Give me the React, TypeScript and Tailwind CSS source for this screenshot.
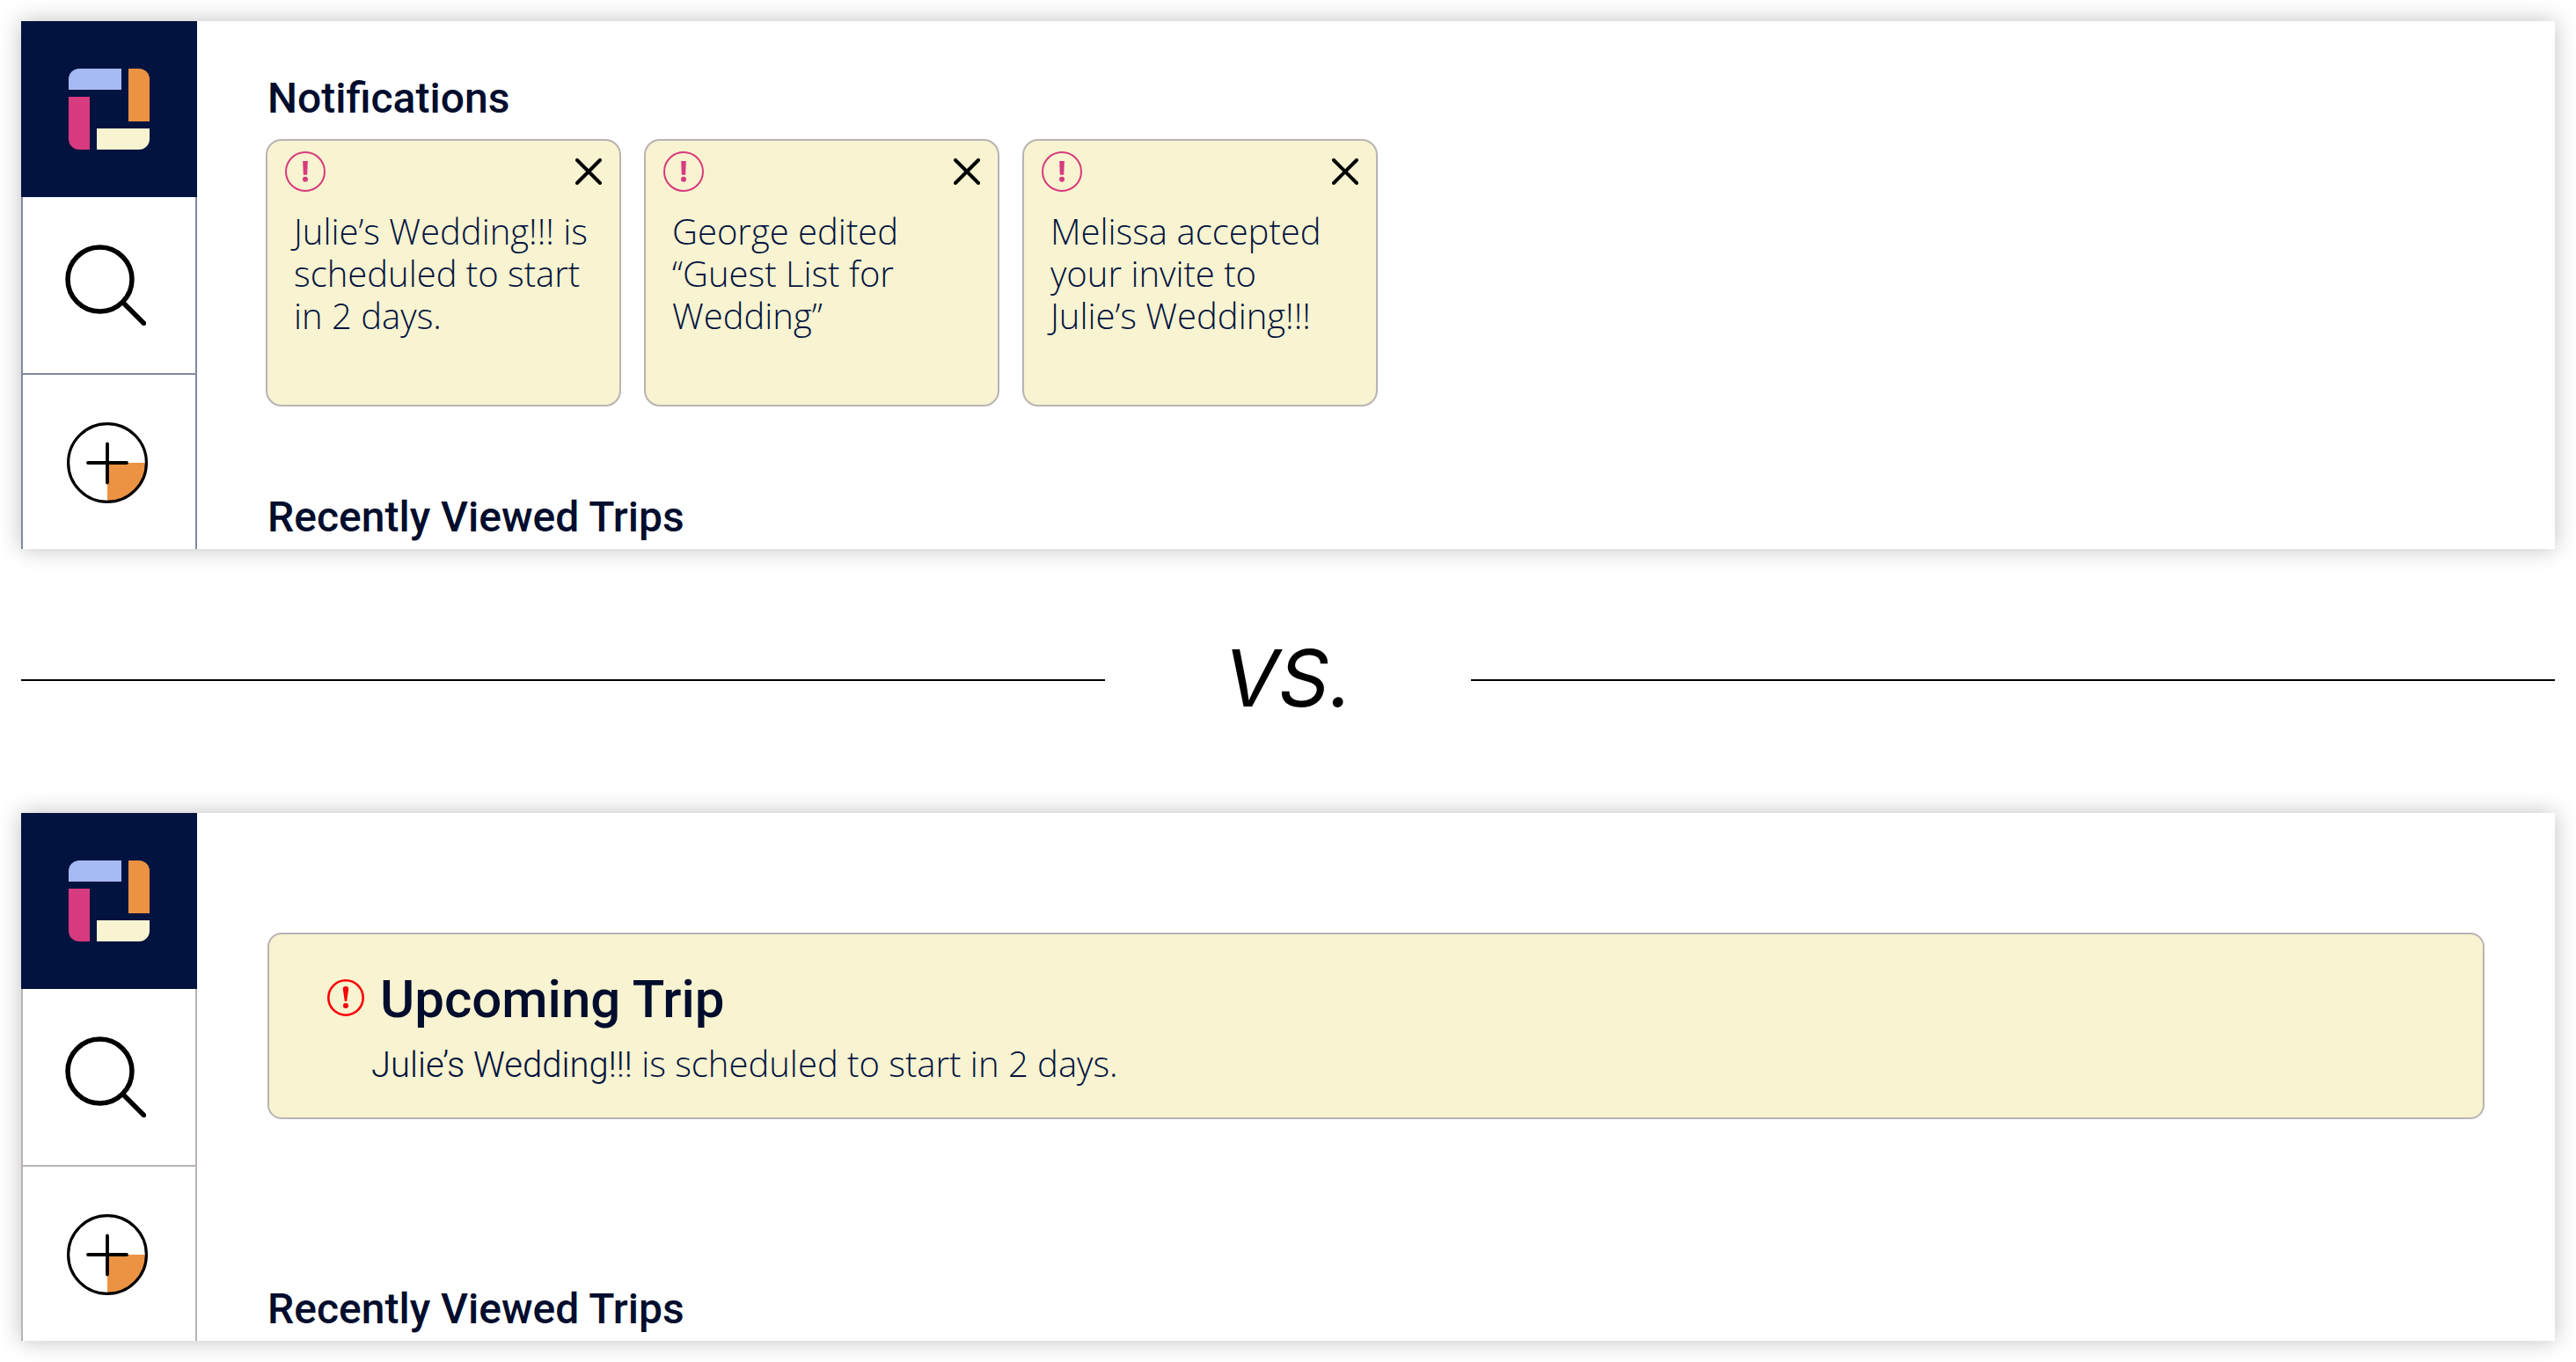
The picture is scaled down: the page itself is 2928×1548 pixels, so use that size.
import React from "react";

const notifications = [
  "Julie’s Wedding!!! is scheduled to start in 2 days.",
  "George edited “Guest List for Wedding”",
  "Melissa accepted your invite to Julie’s Wedding!!!",
];

function Logo() {
  return (
    <svg viewBox="0 0 92 92" className="size-[92px]" aria-hidden="true">
      <path d="M12 0H60V24H0V12A12 12 0 0 1 12 0Z" fill="#a6baf4" />
      <path d="M68 0H80A12 12 0 0 1 92 12V60H68Z" fill="#eb9343" />
      <path d="M32 68H92V80A12 12 0 0 1 80 92H32Z" fill="#f8f3d0" />
      <path d="M0 32H24V92H12A12 12 0 0 1 0 80Z" fill="#d73a7e" />
    </svg>
  );
}

function SearchIcon() {
  return (
    <svg viewBox="0 0 92 92" className="size-[92px]" fill="none" stroke="#000" strokeWidth="5.5" strokeLinecap="round" aria-hidden="true">
      <circle cx="39.5" cy="39.5" r="36.5" />
      <path d="M66 66L89.5 89.5" />
    </svg>
  );
}

function AddIcon() {
  return (
    <svg viewBox="0 0 92 92" className="size-[92px]" fill="none" stroke="#000" strokeLinecap="round" aria-hidden="true">
      <path d="M46 46H90.5A44.5 44.5 0 0 1 46 90.5Z" fill="#eb9343" stroke="none" />
      <circle cx="46" cy="46" r="44.4" strokeWidth="3.2" />
      <path d="M46 24.500V68.500M24 46H68" strokeWidth="3.800" />
    </svg>
  );
}

function AlertIcon() {
  return (
    <svg viewBox="0 0 46 46" className="size-[46px]" fill="none" aria-hidden="true">
      <circle cx="23" cy="23" r="22" stroke="#d73a7e" strokeWidth="2" />
      <path d="M20.2 11H25.8L25.2 26.800H20.800Z" fill="#d73a7e" />
      <circle cx="23" cy="31.800" r="3" fill="#d73a7e" />
    </svg>
  );
}

function RedAlertIcon() {
  return (
    <svg viewBox="0 0 42 42" className="mb-1 size-[42px]" fill="none" aria-hidden="true">
      <circle cx="21" cy="21" r="19.7" stroke="#fb0007" strokeWidth="2.6" />
      <path d="M21 8C23.2 8 24.400 9.200 24.200 11.100L22.200 25H19.800L17.800 11.100C17.600 9.200 18.800 8 21 8Z" fill="#fb0007" />
      <circle cx="21" cy="30" r="3" fill="#fb0007" />
    </svg>
  );
}

function Panel({ lineClass, children }: { lineClass: string; children: React.ReactNode }) {
  return (
    <section className="flex h-[600px] bg-white shadow-[0_0_24px_rgba(0,0,0,0.25)]">
      <nav className="flex w-[200px] shrink-0 flex-col">
        <a href="#home" aria-label="Home" className="flex h-[200px] items-center justify-center bg-[#03133f]">
          <Logo />
        </a>
        <button type="button" aria-label="Search" className={`flex h-[202px] items-center justify-center border-x-2 border-b-2 pr-2 ${lineClass}`}>
          <SearchIcon />
        </button>
        <button type="button" aria-label="Add trip" className={`flex flex-1 items-center justify-center border-x-2 pt-0.5 pr-1 ${lineClass}`}>
          <AddIcon />
        </button>
      </nav>
      <main className="flex min-w-0 flex-1 flex-col justify-between px-20">{children}</main>
    </section>
  );
}

function Heading({ children }: { children: React.ReactNode }) {
  return <h2 className="font-[Roboto,sans-serif] text-[48px] font-medium leading-[56px] text-[#010d2d]">{children}</h2>;
}

export default function App() {
  return (
    <div className="bg-white p-6 font-['Open_Sans',sans-serif] text-[#03133f]">
      <Panel lineClass="border-[#8189a0]">
        <div className="pt-[60px]">
          <Heading>Notifications</Heading>
          <ul className="-ml-0.5 mt-[18px] flex gap-[26px]">
            {notifications.map((text) => (
              <li key={text} className="h-[304px] w-[404px] rounded-[18px] border-2 border-[#b9b3b4] bg-[#f8f3d0]">
                <div className="flex items-center justify-between px-5 pt-3">
                  <AlertIcon />
                  <button type="button" aria-label="Dismiss">
                    <svg viewBox="0 0 30 30" className="size-[30px]" stroke="#000" strokeWidth="4" strokeLinecap="round" aria-hidden="true">
                      <path d="M2 2L28 28M28 2L2 28" />
                    </svg>
                  </button>
                </div>
                <p className="px-[30px] pt-[21px] text-[40px] font-light leading-[48px]">{text}</p>
              </li>
            ))}
          </ul>
        </div>
        <div className="pb-2">
          <Heading>Recently Viewed Trips</Heading>
        </div>
      </Panel>

      <div className="flex h-[300px] items-center gap-[138px] pb-0.5">
        <div className="h-0.5 flex-1 bg-black" />
        <div className="flex h-[96px] w-[140px] items-center justify-center pb-1 font-[Inter,sans-serif] text-[90px] italic leading-none text-black">VS.</div>
        <div className="h-0.5 flex-1 bg-black" />
      </div>

      <Panel lineClass="border-[#b9b3b4]">
        <div className="pt-[136px]">
          <article className="h-[212px] rounded-[16px] border-2 border-[#b9b3b4] bg-[#f8f3d0] pl-[66px] pt-[38px]">
            <div className="flex items-center gap-[18px]">
              <RedAlertIcon />
              <h1 className="font-[Roboto,sans-serif] text-[60px] font-medium leading-[72px] text-[#010d2d]">Upcoming Trip</h1>
            </div>
            <p className="pl-[50px] text-[40px] font-light leading-[74px]">
              <span className="font-[Roboto,sans-serif]">Julie’s Wedding!!!</span> is scheduled to start in 2 days.
            </p>
          </article>
        </div>
        <div className="pb-2">
          <Heading>Recently Viewed Trips</Heading>
        </div>
      </Panel>
    </div>
  );
}
